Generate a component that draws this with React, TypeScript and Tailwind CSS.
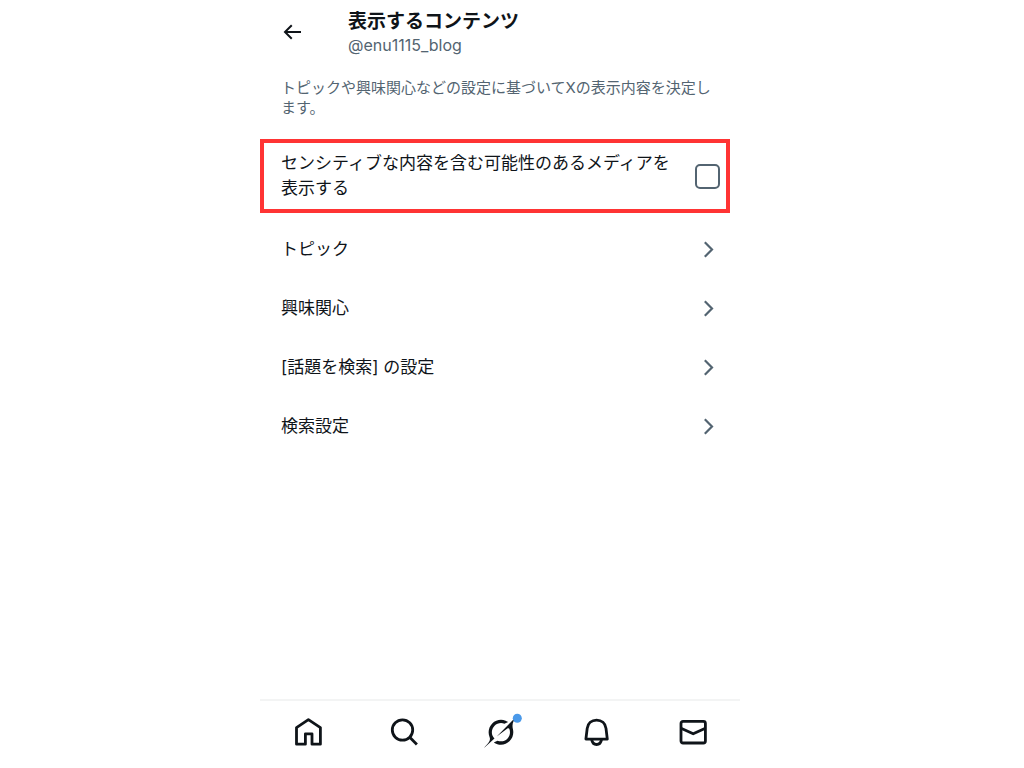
import type { ReactNode } from "react";

const rows = ["トピック", "興味関心", "[話題を検索] の設定", "検索設定"];

function Chevron() {
  return (
    <svg width="12" height="18" viewBox="0 0 12 18" fill="none" stroke="#536471" strokeWidth="2.2" aria-hidden="true">
      <path d="M1.8 2.300 9 9.500l-7.200 7.200" />
    </svg>
  );
}

function NavIcon({ children }: { children: ReactNode }) {
  return (
    <svg
      className="overflow-visible"
      width="32"
      height="32"
      viewBox="0 0 32 32"
      fill="none"
      stroke="#0f1419"
      strokeWidth="2.8"
      strokeLinejoin="round"
      aria-hidden="true"
    >
      {children}
    </svg>
  );
}

const tabs: { label: string; icon: ReactNode }[] = [
  {
    label: "ホーム",
    icon: <path d="M16.400 3.700 28.400 11.600V28.200H20V17.800H13.400V28.200H4.500V11.600Z" />,
  },
  {
    label: "検索",
    icon: (
      <>
        <circle cx="14.500" cy="14" r="10.200" />
        <path d="m21.700 21.200 7.200 7.200" />
      </>
    ),
  },
  {
    label: "Grok",
    icon: (
      <>
        <path
          d="M12.745 20.540l10.970-8.190c.539-.4 1.307-.244 1.564.38 1.349 3.288.746 7.241-1.938 9.955-2.683 2.714-6.417 3.310-9.830 1.954l-3.728 1.745c5.347 3.697 11.840 2.782 15.898-1.324 3.219-3.255 4.216-7.692 3.284-11.693l.008.009c-1.351-5.878.332-8.227 3.782-13.031L33 0l-4.540 4.590v-.014L12.743 20.544m-2.263 1.987c-3.837-3.707-3.175-9.446.1-12.755 2.420-2.449 6.388-3.448 9.852-1.979l3.720-1.737c-.67-.49-1.530-1.017-2.515-1.387-4.455-1.854-9.789-.931-13.410 2.728-3.483 3.523-4.579 8.940-2.697 13.561 1.405 3.454-.899 5.898-3.220 8.364C1.490 30.200.666 31.074 0 32l10.478-9.466"
          fill="#0f1419"
          stroke="none"
        />
        <circle cx="33.300" cy="2.300" r="4.500" fill="#4a99e9" stroke="none" />
      </>
    ),
  },
  {
    label: "通知",
    icon: (
      <>
        <path d="M5.900 23.100 7.200 12.400C7.800 7.500 11.600 4.100 16.600 4.100S25.400 7.500 26 12.400L27.300 23.100Z" />
        <path d="M11.700 23.500C12.200 26.800 14 28.500 16.600 28.500S21 26.800 21.500 23.500" />
      </>
    ),
  },
  {
    label: "メッセージ",
    icon: (
      <>
        <rect x="5" y="5.400" width="24.400" height="21.600" rx="2" />
        <path d="m5 12.200 12.200 5.600 12.200-5.600" />
      </>
    ),
  },
];

export default function App() {
  return (
    <div className="flex min-h-screen justify-center bg-white pr-6 font-['Inter','Noto_Sans_CJK_JP',sans-serif] text-[#0f1419]">
      <div lang="ja" className="flex w-full max-w-[480px] flex-col">
        <header className="flex items-start px-5 pt-2.5">
          <button type="button" aria-label="戻る" className="mt-2.5 mr-11">
            <svg width="24" height="24" viewBox="0 0 24 24" fill="#0f1419" aria-hidden="true">
              <path d="M7.414 13l5.043 5.040-1.414 1.420L3.586 12l7.457-7.460 1.414 1.420L7.414 11H21v2H7.414z" />
            </svg>
          </button>
          <div>
            <h1 className="text-[19px] leading-6 font-bold">表示するコンテンツ</h1>
            <p className="text-base leading-[22px] text-[#536471]">@enu1115_blog</p>
          </div>
        </header>

        <main className="flex-1">
          <p className="mt-[22px] pr-6 pl-[21px] text-[15px] leading-5 text-[#536471]">
            トピックや興味関心などの設定に基づいてXの表示内容を決定します。
          </p>

          <div className="mt-[21px] mr-2.5 flex items-center justify-between border-4 border-[#ff3434] py-2 pr-1.5 pl-[17px]">
            <label htmlFor="sensitive" className="max-w-[400px] text-[17px] leading-[25px]">
              センシティブな内容を含む可能性のあるメディアを表示する
            </label>
            <input
              id="sensitive"
              type="checkbox"
              className="size-[25px] shrink-0 appearance-none rounded-[5px] border-2 border-[#536471] checked:bg-[#1d9bf0]"
            />
          </div>

          <ul className="mt-1.5">
            {rows.map((label) => (
              <li key={label}>
                <a href="#" className="flex h-[59px] items-center justify-between pr-[25px] pl-[21px] text-[17px] leading-6">
                  <span>{label}</span>
                  <Chevron />
                </a>
              </li>
            ))}
          </ul>
        </main>

        <nav className="grid grid-cols-5 border-t-2 border-[#f3f4f4] pt-[15px] pb-5">
          {tabs.map((tab) => (
            <a key={tab.label} href="#" aria-label={tab.label} className="flex justify-center">
              <NavIcon>{tab.icon}</NavIcon>
            </a>
          ))}
        </nav>
      </div>
    </div>
  );
}
